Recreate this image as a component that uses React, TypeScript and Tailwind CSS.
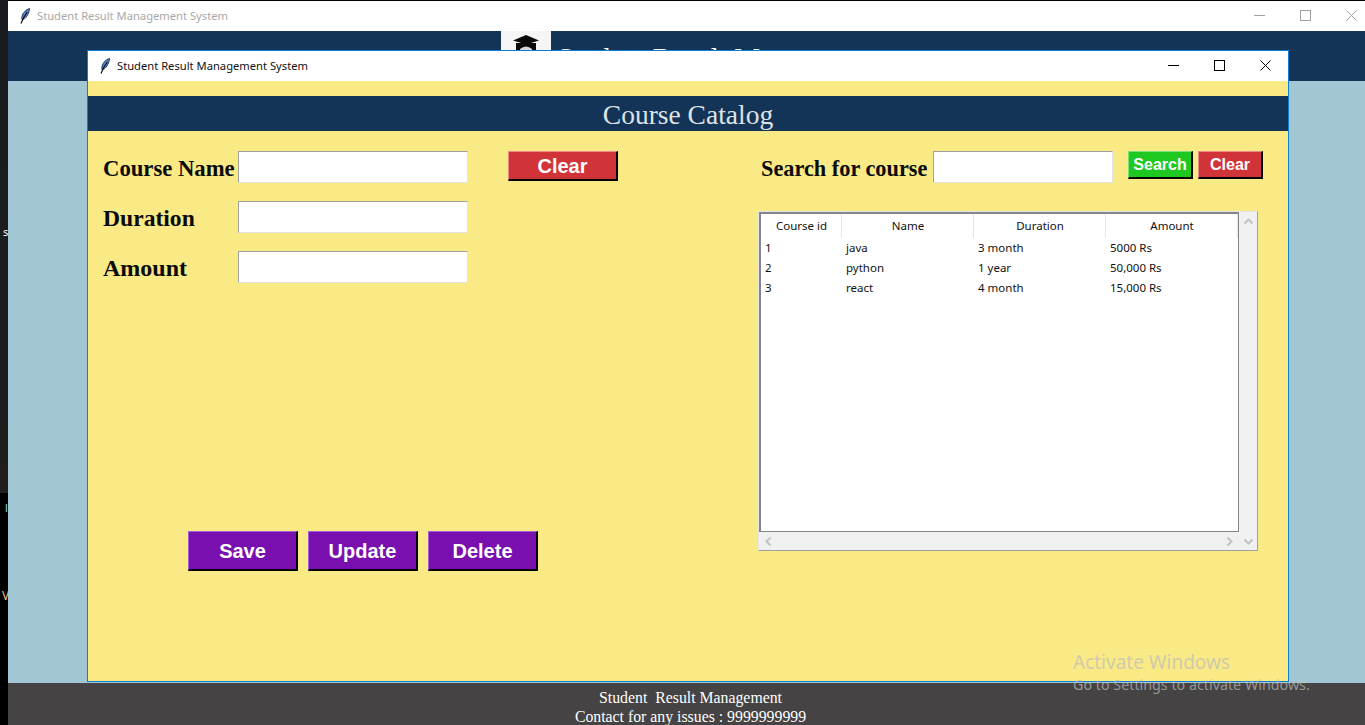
const serif = "font-['Liberation_Serif',serif]";
const sans = "font-['Liberation_Sans',Arial,sans-serif]";
const ui = "font-['Noto_Sans',sans-serif]";

function Feather() {
  return (
    <svg width="12" height="16" viewBox="0 0 12 16" className="block">
      <path d="M10.6 0.6C7.4 1.2 4 4.4 3 8.4C2.6 10 2.8 11.2 3.3 12C6.6 11 10 6 10.6 0.6Z" fill="#4f86d8" stroke="#10131f" strokeWidth="0.8" />
      <path d="M8.3 4C6.4 6.4 4.2 9.4 2 15.5" fill="none" stroke="#000" strokeWidth="1.1" />
    </svg>
  );
}

function Controls({ color, gaps }: { color: string; gaps: string }) {
  return (
    <div className={`mb-[2px] flex items-center ${gaps}`}>
      <svg width="11" height="11" viewBox="0 0 11 11"><path d="M0 5.5H11" stroke={color} strokeWidth="1" /></svg>
      <svg width="11" height="11" viewBox="0 0 11 11"><rect x="0.5" y="0.5" width="10" height="10" fill="none" stroke={color} strokeWidth="1" /></svg>
      <svg width="11" height="11" viewBox="0 0 11 11"><path d="M0.5 0.5L10.5 10.5M10.5 0.5L0.5 10.5" stroke={color} strokeWidth="1" /></svg>
    </div>
  );
}

function TkButton({ label, className }: { label: string; className: string }) {
  return (
    <button className={`flex items-center justify-center border-t border-l border-b-2 border-r-2 border-b-black border-r-black font-bold text-white ${sans} ${className}`}>
      {label}
    </button>
  );
}

function Field({ className = "w-[230px]" }: { className?: string }) {
  return <div className={`h-[32px] border border-t-[#a0a0a0] border-l-[#a0a0a0] border-r-[#e3e3e3] border-b-[#e3e3e3] bg-white ${className}`} />;
}

function FormRow({ label, size }: { label: string; size: string }) {
  return (
    <div className="flex h-[32px] items-center">
      <span className={`w-[135px] whitespace-nowrap font-bold text-[#0b0b0b] ${size} ${serif}`}>{label}</span>
      <Field />
    </div>
  );
}

const columns = ["Course id", "Name", "Duration", "Amount"];
const rows = [
  ["1", "java", "3 month", "5000 Rs"],
  ["2", "python", "1 year", "50,000 Rs"],
  ["3", "react", "4 month", "15,000 Rs"],
];
const colWidths = ["w-[81px]", "w-[132px]", "w-[132px]", "w-[132px]"];

function Arrow({ d }: { d: string }) {
  return (
    <svg width="9" height="9" viewBox="0 0 9 9"><path d={d} fill="none" stroke="#c2c2c2" strokeWidth="2" /></svg>
  );
}

function Table() {
  return (
    <div className="flex h-[340px] w-[500px] flex-col border border-t-[#e4e4e4] border-l-[#e4e4e4] border-r-[#a0a0a0] border-b-[#a0a0a0] bg-[#f0f0f0]">
      <div className="flex min-h-0 flex-1">
        <div className={`w-[480px] border-b border-l-2 border-r border-t-2 border-[#85858d] bg-white text-[11.5px] text-[#111] ${ui}`}>
          <div className="flex h-[24px]">
            {columns.map((c, i) => (
              <div key={c} className={`flex items-center justify-center border-r border-[#e5e5e5] pl-[1px] ${colWidths[i]}`}>{c}</div>
            ))}
          </div>
          {rows.map((r) => (
            <div key={r[0]} className="flex h-[20px] items-center">
              {r.map((v, i) => (
                <div key={i} className={`pl-[4px] ${colWidths[i]}`}>{v}</div>
              ))}
            </div>
          ))}
        </div>
        <div className="flex w-[18px] justify-center pt-[5px]">
          <Arrow d="M0.5 6.5L4.5 2.5L8.5 6.5" />
        </div>
      </div>
      <div className="flex h-[18px] items-center">
        <div className="flex w-[480px] items-center justify-between px-[5px]">
          <Arrow d="M6.5 0.5L2.5 4.5L6.5 8.5" />
          <Arrow d="M2.5 0.5L6.5 4.5L2.5 8.5" />
        </div>
        <div className="flex w-[18px] justify-center">
          <Arrow d="M0.5 2.5L4.5 6.5L8.5 2.5" />
        </div>
      </div>
    </div>
  );
}

function CourseWindow() {
  return (
    <div className="absolute left-[87px] top-[50px] flex h-[632px] w-[1202px] flex-col border border-[#0c7fd6] bg-[#f9ea85]">
      <div className="flex h-[30px] items-center justify-between bg-white pl-[11px] pr-[17px]">
        <div className="flex items-center gap-[6px]">
          <Feather />
          <span className={`text-[11.2px] text-[#111] ${ui}`}>Student Result Management System</span>
        </div>
        <Controls color="#000" gaps="gap-[35px]" />
      </div>
      <div className={`mt-[15px] flex h-[35px] items-center justify-center bg-[#133456] pt-[3px] text-[27.5px] text-[#dfe3e6] ${serif}`}>
        Course Catalog
      </div>
      <div className="flex flex-1">
        <div className="w-[670px] pl-[15px] pt-[20px]">
          <div className="flex items-start">
            <div className="flex flex-col gap-[18px]">
              <FormRow label="Course Name" size="pt-[5px] text-[22.7px]" />
              <FormRow label="Duration" size="pt-[3px] text-[23.6px]" />
              <FormRow label="Amount" size="pt-[2px] text-[24px]" />
            </div>
            <TkButton label="Clear" className="ml-[40px] h-[30px] w-[110px] border-t-[#f08a8a] border-l-[#f08a8a] bg-[#d13438] text-[20px]" />
          </div>
          <div className="ml-[85px] mt-[248px] flex gap-[10px]">
            <TkButton label="Save" className="h-[40px] w-[110px] border-t-[#a55fd8] border-l-[#a55fd8] bg-[#7a0fb0] text-[20px]" />
            <TkButton label="Update" className="h-[40px] w-[110px] border-t-[#a55fd8] border-l-[#a55fd8] bg-[#7a0fb0] text-[20px]" />
            <TkButton label="Delete" className="h-[40px] w-[110px] border-t-[#a55fd8] border-l-[#a55fd8] bg-[#7a0fb0] text-[20px]" />
          </div>
        </div>
        <div className="pt-[20px]">
          <div className="flex items-start">
            <div className="flex h-[32px] items-center pl-[3px]">
              <span className={`w-[172px] whitespace-nowrap pt-[3px] text-[22.3px] font-bold text-[#0b0b0b] ${serif}`}>Search for course</span>
              <Field className="w-[180px]" />
            </div>
            <TkButton label="Search" className="ml-[15px] h-[28px] w-[65px] border-t-[#7be27b] border-l-[#7be27b] bg-[#1ec820] text-[16px]" />
            <TkButton label="Clear" className="ml-[5px] h-[28px] w-[65px] border-t-[#f08a8a] border-l-[#f08a8a] bg-[#d13438] text-[16px]" />
          </div>
          <div className="mt-[28px]">
            <Table />
          </div>
        </div>
      </div>
    </div>
  );
}

export default function App() {
  return (
    <div className="relative flex h-[725px] w-[1365px] overflow-hidden bg-black">
      <div className={`relative w-[8px] shrink-0 overflow-hidden bg-gradient-to-b from-[#191b1e] via-[#1c1c1d] to-[#2a2219] ${ui}`}>
        <div className="absolute bottom-0 left-0 h-[232px] w-full bg-black" />
        <span className="absolute left-[3px] top-[225px] text-[11px] leading-[14px] text-white">s</span>
        <span className="absolute left-[5px] top-[501px] text-[11px] leading-[14px] text-[#9ad4f0]">l</span>
        <span className="absolute left-[2px] top-[589px] text-[12px] leading-[14px] text-[#f2c078]">V</span>
      </div>
      <div className="flex flex-1 flex-col pt-px">
        <div className="flex h-[30px] items-center justify-between bg-white pl-[11px] pr-[8px]">
          <div className="flex items-center gap-[6px]">
            <Feather />
            <span className={`text-[11.2px] text-[#a8a8a8] ${ui}`}>Student Result Management System</span>
          </div>
          <Controls color="#a0a0a0" gaps="gap-[35px]" />
        </div>
        <div className="flex h-[50px] items-start overflow-hidden bg-[#133456] pl-[493px]">
          <div className="flex h-[50px] w-[50px] items-start justify-center bg-[#f5f5f5] pt-[4px]">
            <svg width="28" height="28" viewBox="0 0 28 28">
              <path d="M14 0L27 5.5L14 9.5L1 5.5Z" fill="#0a0a0a" />
              <path d="M4 8H24V24H4Z" fill="#0a0a0a" />
              <path d="M8 14Q14 9 20 14V24H8Z" fill="#d8d8d8" />
            </svg>
          </div>
          <span className={`ml-[6px] mt-[10px] whitespace-nowrap text-[29px] leading-[34px] text-white ${serif}`}>Student Result Management</span>
        </div>
        <div className="flex-1 bg-[#a3c6d5]" />
        <div className={`flex h-[42px] flex-col items-center overflow-hidden bg-[#454344] pl-[8px] pt-[4px] text-[15.8px] text-white ${serif}`}>
          <span className="leading-[22px]">Student&nbsp; Result Management</span>
          <span className="leading-[16px]">Contact for any issues : 9999999999</span>
        </div>
      </div>
      <CourseWindow />
      <div className={`pointer-events-none absolute left-[1073px] top-[650px] text-[#bdbdbd]/70 ${ui}`}>
        <div className="text-[19px] leading-[25px]">Activate Windows</div>
        <div className="text-[14.3px] leading-[20px]">Go to Settings to activate Windows.</div>
      </div>
    </div>
  );
}
